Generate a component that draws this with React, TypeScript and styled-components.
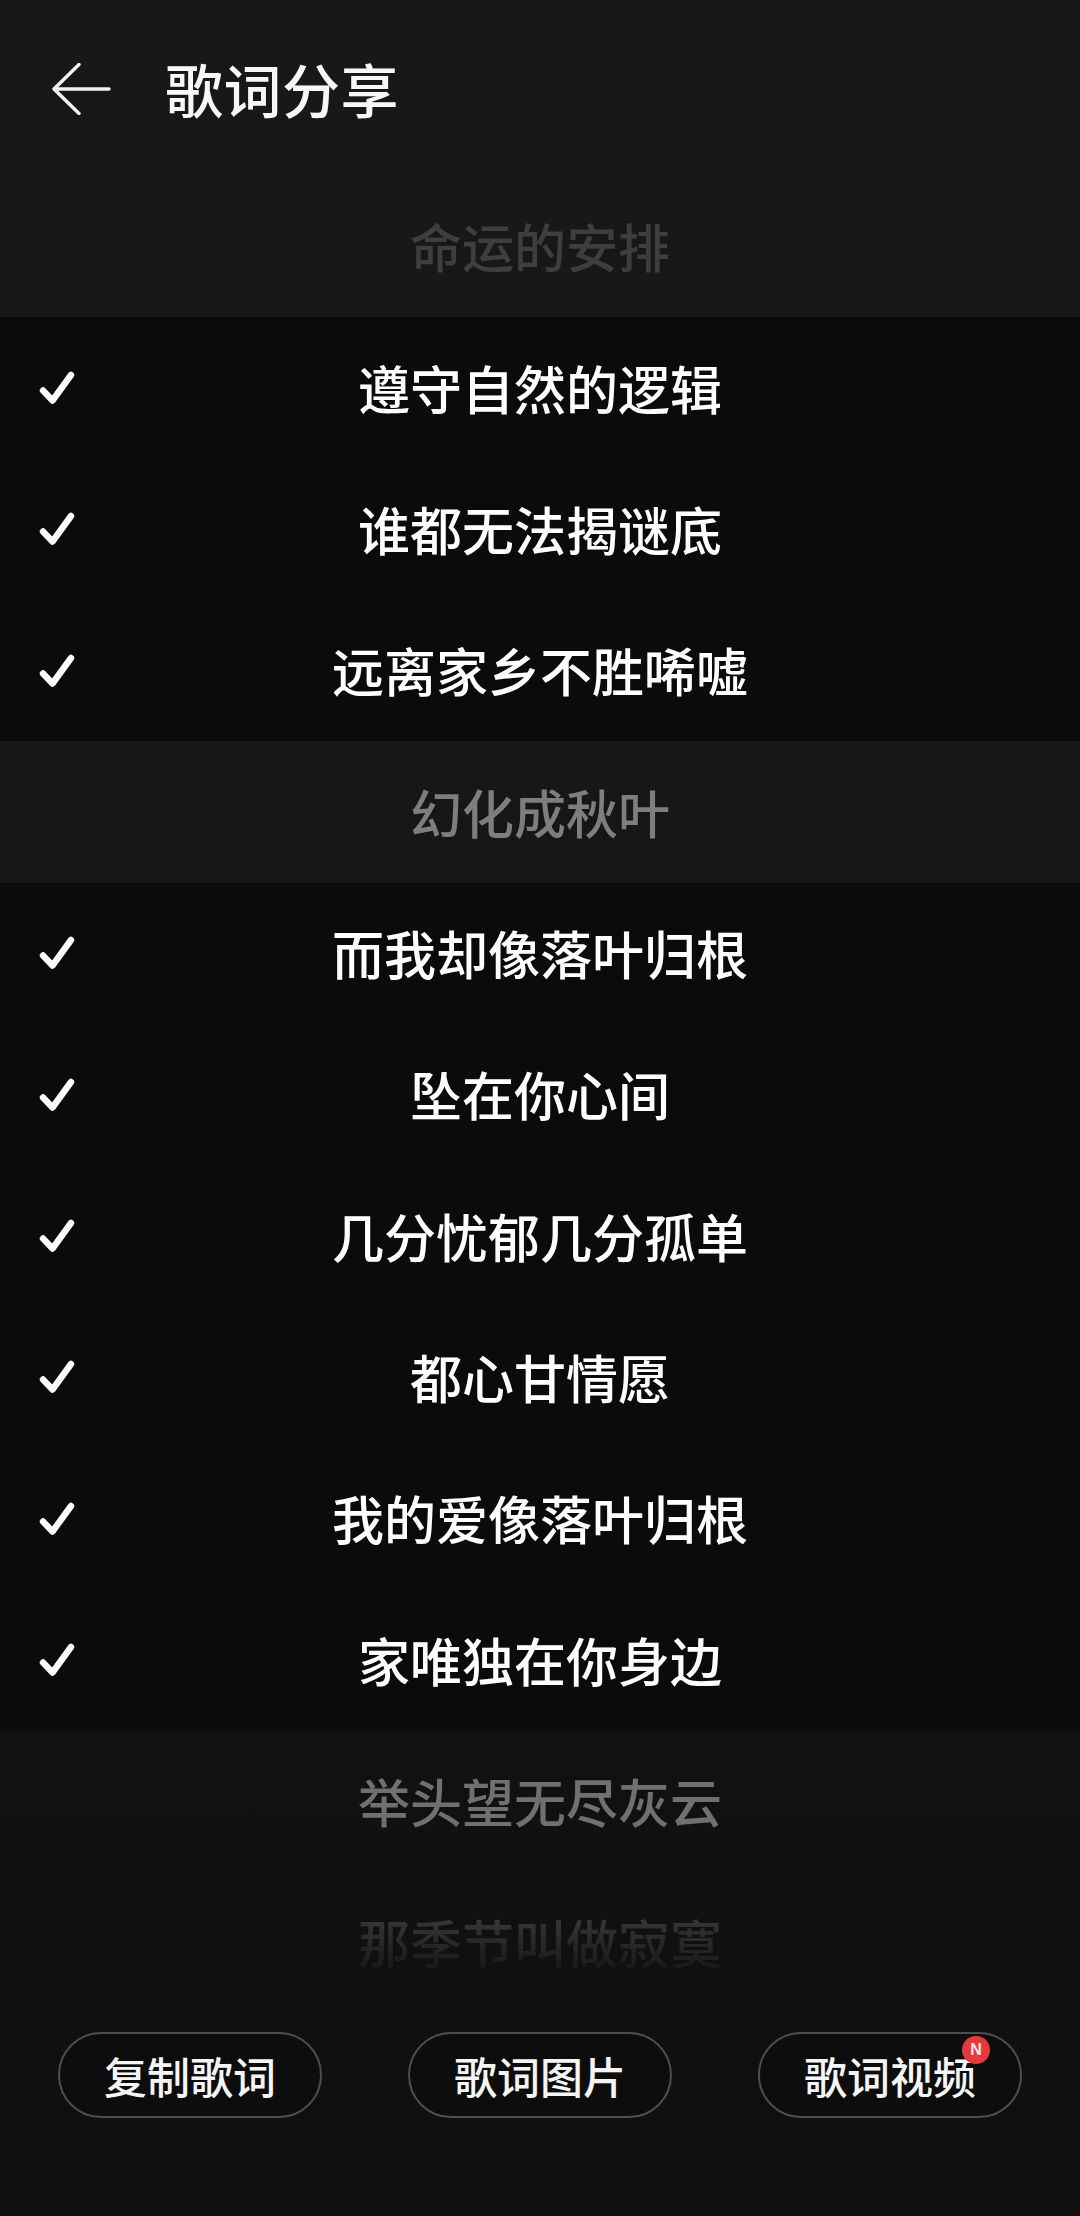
import React from 'react';
import styled, { createGlobalStyle, css } from 'styled-components';

type Tone = 'active' | 'dim' | 'muted' | 'faint' | 'fading';

interface Line {
  text: string;
  selected: boolean;
  tone: Tone;
}

const LINES: Line[] = [
  { text: '命运的安排', selected: false, tone: 'faint' },
  { text: '遵守自然的逻辑', selected: true, tone: 'active' },
  { text: '谁都无法揭谜底', selected: true, tone: 'active' },
  { text: '远离家乡不胜唏嘘', selected: true, tone: 'active' },
  { text: '幻化成秋叶', selected: false, tone: 'muted' },
  { text: '而我却像落叶归根', selected: true, tone: 'active' },
  { text: '坠在你心间', selected: true, tone: 'active' },
  { text: '几分忧郁几分孤单', selected: true, tone: 'active' },
  { text: '都心甘情愿', selected: true, tone: 'active' },
  { text: '我的爱像落叶归根', selected: true, tone: 'active' },
  { text: '家唯独在你身边', selected: true, tone: 'active' },
  { text: '举头望无尽灰云', selected: false, tone: 'dim' },
  { text: '那季节叫做寂寞', selected: false, tone: 'fading' },
];

const ACTIONS = [
  { label: '复制歌词', badge: false },
  { label: '歌词图片', badge: false },
  { label: '歌词视频', badge: true },
];

const BackArrow = () => (
  <svg width='60' height='52' viewBox='0 0 60 52' fill='none'>
    <path
      d='M58 26H3M28 1.5L3 26l25 24.5'
      stroke='#f2f2f2'
      strokeWidth='3.4'
      strokeLinecap='round'
      strokeLinejoin='round'
    />
  </svg>
);

const Tick = () => (
  <svg width='40' height='36' viewBox='0 0 40 36' fill='none'>
    <path
      d='M5 20.5l9.5 10L33 5'
      stroke='#ffffff'
      strokeWidth='6.4'
      strokeLinecap='round'
      strokeLinejoin='round'
    />
  </svg>
);

const LyricRow: React.FC<{ line: Line }> = ({ line }) => (
  <Row selected={line.selected}>
    <CheckCell>{line.selected && <Tick />}</CheckCell>
    <LyricText tone={line.tone}>{line.text}</LyricText>
    <span />
  </Row>
);

export default function App() {
  return (
    <>
      <GlobalStyle />
      <Page>
        <Header>
          <BackButton aria-label='back'>
            <BackArrow />
          </BackButton>
          <Title>歌词分享</Title>
        </Header>
        <LyricList>
          {LINES.map((line, index) => (
            <LyricRow key={`${line.text}-${index}`} line={line} />
          ))}
        </LyricList>
        <ActionBar>
          {ACTIONS.map((action) => (
            <PillButton key={action.label}>
              {action.label}
              {action.badge && <Badge>N</Badge>}
            </PillButton>
          ))}
        </ActionBar>
      </Page>
    </>
  );
}

const GlobalStyle = createGlobalStyle`
  html, body {
    margin: 0;
    padding: 0;
    background: #0f0f0f;
  }
  * {
    box-sizing: border-box;
  }
`;

const FONT = `"Noto Sans CJK SC", "Noto Sans", sans-serif`;

const Page = styled.div`
  width: 1080px;
  height: 2216px;
  overflow: hidden;
  display: flex;
  flex-direction: column;
  font-family: ${FONT};
  background: linear-gradient(
    to bottom,
    #181816 0,
    #171715 700px,
    #141413 1300px,
    #111111 1740px,
    #0f0f0f 100%
  );
`;

const Header = styled.div`
  height: 176px;
  flex-shrink: 0;
  display: flex;
  align-items: center;
  padding: 0 0 0 51px;
  gap: 54px;
`;

const BackButton = styled.div`
  display: flex;
  align-items: center;
  margin-top: 2px;
`;

const Title = styled.h1`
  margin: 0;
  font-size: 58px;
  font-weight: 500;
  color: #f7f7f7;
  line-height: 1;
  letter-spacing: 0.5px;
`;

const LyricList = styled.div`
  display: flex;
  flex-direction: column;
`;

const Row = styled.div<{ selected: boolean }>`
  height: 141.33px;
  flex-shrink: 0;
  display: grid;
  grid-template-columns: 112px 1fr 112px;
  align-items: center;
  background: ${({ selected }) => (selected ? '#0b0b0b' : 'transparent')};
`;

const CheckCell = styled.span`
  display: flex;
  align-items: center;
  padding-left: 38px;
  height: 100%;
`;

const toneStyles: Record<Tone, ReturnType<typeof css>> = {
  active: css`
    color: #ffffff;
  `,
  muted: css`
    color: #7e7e7e;
  `,
  dim: css`
    color: #707070;
  `,
  faint: css`
    color: #3e3e3e;
  `,
  fading: css`
    color: transparent;
    background: linear-gradient(to bottom, #3c3c3c 0%, #262626 55%, #161616 100%);
    -webkit-background-clip: text;
    background-clip: text;
  `,
};

const LyricText = styled.span<{ tone: Tone }>`
  text-align: center;
  font-size: 52px;
  font-weight: 500;
  line-height: 1.2;
  white-space: nowrap;
  ${({ tone }) => toneStyles[tone]}
`;

const ActionBar = styled.div`
  display: flex;
  justify-content: space-between;
  padding: 0 58px;
  margin-top: 19px;
`;

const PillButton = styled.div`
  position: relative;
  width: 264px;
  height: 86px;
  border: 2px solid #4e4e4e;
  border-radius: 43px;
  display: flex;
  align-items: center;
  justify-content: center;
  font-size: 43px;
  font-weight: 500;
  color: #f5f5f5;
  background: #0d0d0d;
`;

const Badge = styled.span`
  position: absolute;
  top: 2px;
  right: 30px;
  width: 28px;
  height: 28px;
  border-radius: 50%;
  background: #e7393d;
  color: #ffe8e8;
  font-family: "Liberation Sans", sans-serif;
  font-size: 16px;
  font-weight: 700;
  display: flex;
  align-items: center;
  justify-content: center;
`;
